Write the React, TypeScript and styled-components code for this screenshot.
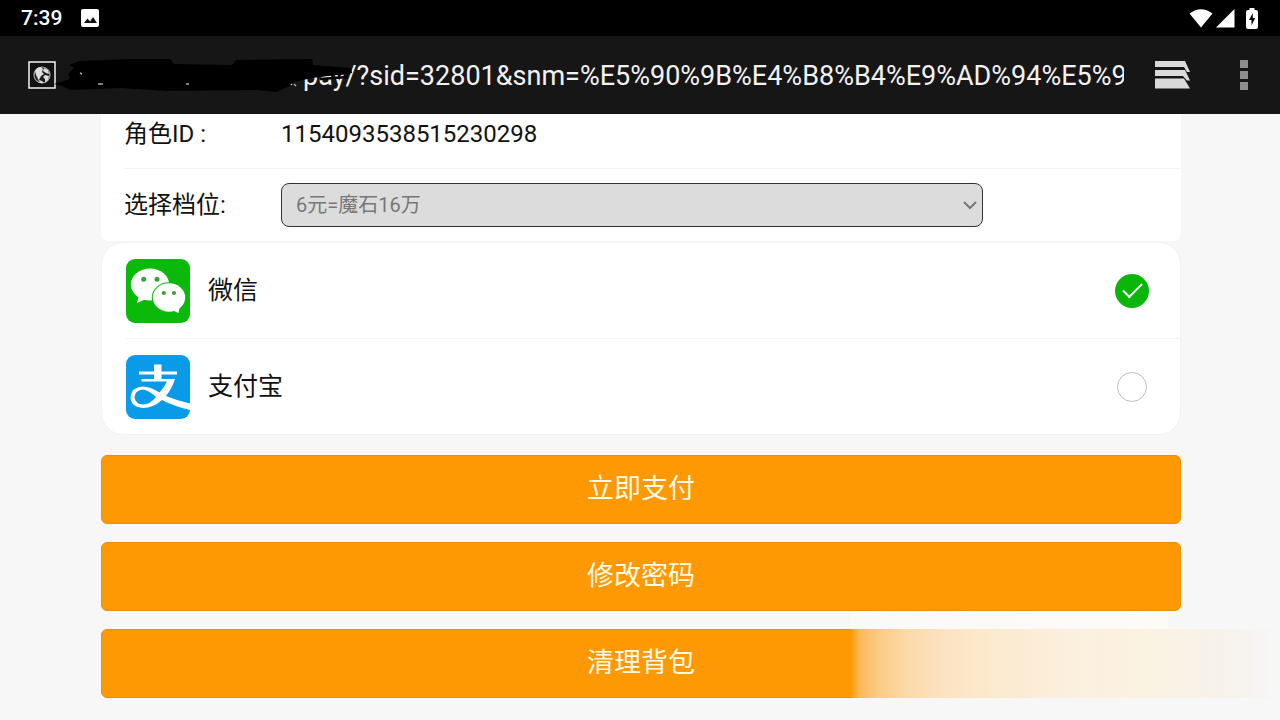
import React from "react";
import styled, { createGlobalStyle } from "styled-components";

const GlobalStyle = createGlobalStyle`
  * { box-sizing: border-box; }
  body {
    margin: 0;
    background: #f7f7f7;
    color: #111;
    font-family: Roboto, "Noto Sans CJK SC", sans-serif;
    overflow-x: hidden;
  }
  button, input, select { font-family: inherit; }
`;

const StatusBar = styled.header`
  display: flex;
  align-items: center;
  justify-content: space-between;
  height: 36px;
  padding: 0 22px 0 21px;
  background: #000;
  color: #fff;
`;

const StatusGroup = styled.div<{ $gap: number }>`
  display: flex;
  align-items: center;
  gap: ${(p) => p.$gap}px;
`;

const BatterySlot = styled.div`
  display: flex;
  margin-left: 8px;
`;

const Clock = styled.span`
  font-size: 21px;
  line-height: 24px;
  font-weight: 500;
`;

const Toolbar = styled.nav`
  position: relative;
  display: flex;
  align-items: center;
  height: 78px;
  padding: 0 20px 0 28px;
  background: #161616;
`;

const Address = styled.input`
  flex: 1;
  min-width: 0;
  height: 48px;
  margin: 0 31px 0 0;
  padding: 2px 0 0 247px;
  border: 0;
  outline: 0;
  background: transparent;
  color: #f2f2f2;
  font-size: 27px;
`;

const Redaction = styled.svg`
  position: absolute;
  left: 50px;
  top: 20px;
  pointer-events: none;
`;

const IconButton = styled.button`
  display: flex;
  align-items: center;
  justify-content: center;
  padding: 0;
  border: 0;
  background: transparent;
`;

const TabsButton = styled(IconButton)`
  width: 36px;
  height: 48px;
  margin-right: 37px;
`;

const MenuButton = styled(IconButton)`
  width: 32px;
  height: 48px;
`;

const Content = styled.main`
  padding: 0 99px 22px 101px;
`;

const InfoPanel = styled.section`
  padding-left: 23px;
  border-radius: 0 0 8px 8px;
  background: #fff;
`;

const IdRow = styled.div`
  display: flex;
  align-items: center;
  padding: 4px 0 18px;
  border-bottom: 1px solid #f4f4f4;
  font-size: 24px;
  line-height: 32px;
`;

const TierRow = styled.div`
  display: flex;
  align-items: center;
  height: 72px;
  font-size: 24px;
  line-height: 32px;
`;

const FieldName = styled.label`
  flex: 0 0 157px;
`;

const SelectBox = styled.div`
  position: relative;
  flex: 0 0 auto;
  width: 66.4%;
`;

const TierSelect = styled.select`
  display: block;
  width: 100%;
  height: 44px;
  padding: 0 40px 0 14px;
  border: 1px solid #333;
  border-radius: 8px;
  appearance: none;
  background: #dcdcdc;
  color: #777;
  font-size: 20px;
  opacity: 1;
`;

const Chevron = styled.svg`
  position: absolute;
  right: 6px;
  top: 17px;
  pointer-events: none;
`;

const PayCard = styled.section`
  margin-top: 1px;
  padding-left: 24px;
  border: 1px solid #f2f2f2;
  border-radius: 22px;
  background: #fff;
`;

const PayOption = styled.label`
  display: flex;
  align-items: center;
  height: 95px;
  padding-right: 31px;
  font-size: 25px;
  line-height: 32px;

  & + & {
    height: 96px;
    border-top: 1px solid #f4f4f4;
  }
`;

const PayName = styled.span`
  flex: 1;
  margin-left: 18px;
`;

const PayRadio = styled.input`
  display: grid;
  place-items: center;
  width: 30px;
  height: 30px;
  margin: 0 2px;
  border: 1px solid #bdbdbd;
  border-radius: 50%;
  appearance: none;
  background: #fff;

  &:checked {
    width: 34px;
    height: 34px;
    margin: 0;
    border: 0;
    background: #0bb60b;
  }

  &:checked::after {
    content: "";
    width: 17px;
    height: 8px;
    margin-bottom: 6px;
    border: solid #fff;
    border-width: 0 0 2px 2px;
    transform: rotate(-45deg);
  }
`;

const Actions = styled.div`
  position: relative;
  display: grid;
  gap: 18px;
  margin-top: 20px;
`;

const ActionButton = styled.button`
  height: 69px;
  padding: 0 0 6px;
  border: 1px solid #e8900c;
  border-radius: 6px;
  background: #ff9903;
  color: #fffbe6;
  font-size: 27px;
`;

const Haze = styled.div`
  position: absolute;
  left: 69.4%;
  right: -99px;
  bottom: 0;
  height: 69px;
  background: linear-gradient(
    to right,
    #ff9903 0,
    #fdb75a 8px,
    #fbcb85 28px,
    #fcd9a8 55px,
    #fce3c2 95px,
    #fceace 140px,
    #fcefde 220px,
    #faf2e2 300px,
    #f6f2eb 370px,
    #f7f4f1 405px,
    #f7f7f7 424px
  );
  pointer-events: none;

  &::before {
    content: "";
    position: absolute;
    left: 0;
    right: 112px;
    bottom: 100%;
    height: 17px;
    background: linear-gradient(to right, #f9f9f8, #fdfbf6);
  }
`;

const PictureIcon = () => (
  <svg width="18" height="18" viewBox="0 0 18 18" aria-hidden="true">
    <rect width="18" height="18" rx="2" fill="#fff" />
    <path d="M3 14l3.500-4.500 2.500 3 3-4.500 4 6z" fill="#111" />
  </svg>
);

const WifiIcon = () => (
  <svg width="24" height="19" viewBox="0 0 24 19" aria-hidden="true">
    <path d="M.5 4.500Q12-4 23.500 4.500L12 18.500z" fill="#fff" />
  </svg>
);

const SignalIcon = () => (
  <svg width="19" height="19" viewBox="0 0 19 19" aria-hidden="true">
    <path d="M18.500 0v18.500H0z" fill="#fff" />
  </svg>
);

const BatteryIcon = () => (
  <svg width="12" height="21" viewBox="0 0 12 21" aria-hidden="true">
    <path d="M3.500 0h5v2H10q2 0 2 2v15q0 2-2 2H2q-2 0-2-2V4q0-2 2-2h1.500z" fill="#fff" />
    <path d="M6.800 5L3 12h2.500v5.500L9.200 10H6.800z" fill="#000" />
  </svg>
);

const GlobeIcon = () => (
  <svg width="28" height="28" viewBox="0 0 28 28" role="img" aria-label="site">
    <rect x="1" y="1" width="26" height="26" fill="#111" stroke="#f4f4f4" strokeWidth="1.500" />
    <circle cx="14" cy="14" r="8" fill="#1c1c1c" stroke="#a8a8a8" strokeWidth="1.200" />
    <path d="M7 10q2-4 6-4l2 2-1 3 2 2-3 2-2 4 3 1 2 2-4 0-2-4-2-4zM16 7l4 2 1 4-3-1-3-2zM17 14l4 1-1 4-3 2 0-3-2-2z" fill="#dedede" />
  </svg>
);

const Scribble = () => (
  <Redaction width="310" height="38" viewBox="0 0 310 38" aria-hidden="true">
    <path
      d="M4 28L20 23 18 18 24 12 19 9 30 5 80 3 120 3 124 8 182 9 186 4 262 3 263 9 301 12 302 17 262 22 244 26 238 31 226 36 206 34 118 35 70 32 20 34 12 30z"
      fill="#000"
    />
    <path d="M250 20L300 17M268 12L296 15M270 23L298 21" stroke="#000" strokeWidth="2.500" />
    <path d="M30 17l2 1M48 28h5M136 28h3M241 28l1 1M244 28l2 2" stroke="#aaa" strokeWidth="1.500" />
  </Redaction>
);

const WindowsIcon = () => (
  <svg width="36" height="28" viewBox="0 0 36 28" aria-hidden="true">
    <path d="M0 0h30l5 11h-3L29 6H0z" fill="#dadada" />
    <path d="M0 9h28l2 0 5 10.500h-3L28 15H0z" fill="#dadada" />
    <path d="M0 17.500h29l6 10H0z" fill="#dadada" />
  </svg>
);

const DotsIcon = () => (
  <svg width="8" height="30" viewBox="0 0 8 30" aria-hidden="true">
    <path d="M0 0h8v8H0zM0 11h8v8H0zM0 22h8v8H0z" fill="#8e8e8e" />
  </svg>
);

const WechatLogo = () => (
  <svg width="64" height="64" viewBox="0 0 64 64" aria-hidden="true">
    <rect width="64" height="64" rx="9" fill="#0bb90b" />
    <ellipse cx="24" cy="25.500" rx="19.200" ry="16" fill="#fff" />
    <path d="M13 36l-2 8 9-4z" fill="#fff" />
    <ellipse cx="43" cy="38.500" rx="17.200" ry="15.200" fill="#0bb90b" />
    <ellipse cx="43" cy="38.500" rx="16.200" ry="14.200" fill="#fff" />
    <path d="M54 46l-1.500 8-7-3z" fill="#fff" />
    <circle cx="17.700" cy="20.300" r="2.500" fill="#3a9e3a" />
    <circle cx="31" cy="20.300" r="2.500" fill="#3a9e3a" />
    <circle cx="37.800" cy="34" r="2.100" fill="#3a9e3a" />
    <circle cx="48" cy="34" r="2.100" fill="#3a9e3a" />
  </svg>
);

const AlipayLogo = () => (
  <svg width="64" height="64" viewBox="0 0 64 64" aria-hidden="true">
    <rect width="64" height="64" rx="9" fill="#0a9be8" />
    <path d="M28 9.500h7.500v7H51v3H35.500V24H49q-3 9.500-9 17 12 5 24 7.500V55Q50 52 36 45q-9 8-19 8-12-1-12.500-10.500 1-10.500 12-11 8 0 17 6 5-5.500 7.500-11H15.500V24H28v-4.500H13v-3h15zM30 42q-8-7.500-14-7.500-7 1-7.500 8 1 6.500 8.500 7 7 0 13-7.500z" fill="#fff" fillRule="evenodd" />
  </svg>
);

const methods = [
  { id: "wechat", name: "微信", logo: <WechatLogo /> },
  { id: "alipay", name: "支付宝", logo: <AlipayLogo /> },
];

const actions = ["立即支付", "修改密码", "清理背包"];

export default function App() {
  return (
    <>
      <GlobalStyle />
      <StatusBar>
        <StatusGroup $gap={19}>
          <Clock>7:39</Clock>
          <PictureIcon />
        </StatusGroup>
        <StatusGroup $gap={3}>
          <WifiIcon />
          <SignalIcon />
          <BatterySlot>
            <BatteryIcon />
          </BatterySlot>
        </StatusGroup>
      </StatusBar>
      <Toolbar>
        <GlobeIcon />
        <Address
          aria-label="URL"
          readOnly
          value="pay/?sid=32801&snm=%E5%90%9B%E4%B8%B4%E9%AD%94%E5%9"
        />
        <Scribble />
        <TabsButton aria-label="Tabs">
          <WindowsIcon />
        </TabsButton>
        <MenuButton aria-label="Menu">
          <DotsIcon />
        </MenuButton>
      </Toolbar>
      <Content>
        <InfoPanel>
          <IdRow>
            <FieldName as="span">角色ID :</FieldName>
            <span>1154093538515230298</span>
          </IdRow>
          <TierRow>
            <FieldName htmlFor="tier">选择档位:</FieldName>
            <SelectBox>
              <TierSelect id="tier" disabled>
                <option>6元=魔石16万</option>
              </TierSelect>
              <Chevron width="14" height="10" viewBox="0 0 14 10" aria-hidden="true">
                <path d="M1 2l6 6 6-6" fill="none" stroke="#777" strokeWidth="2" />
              </Chevron>
            </SelectBox>
          </TierRow>
        </InfoPanel>
        <PayCard>
          {methods.map((m, i) => (
            <PayOption key={m.id}>
              {m.logo}
              <PayName>{m.name}</PayName>
              <PayRadio type="radio" name="method" value={m.id} defaultChecked={i === 0} />
            </PayOption>
          ))}
        </PayCard>
        <Actions>
          {actions.map((a) => (
            <ActionButton key={a}>{a}</ActionButton>
          ))}
          <Haze />
        </Actions>
      </Content>
    </>
  );
}
